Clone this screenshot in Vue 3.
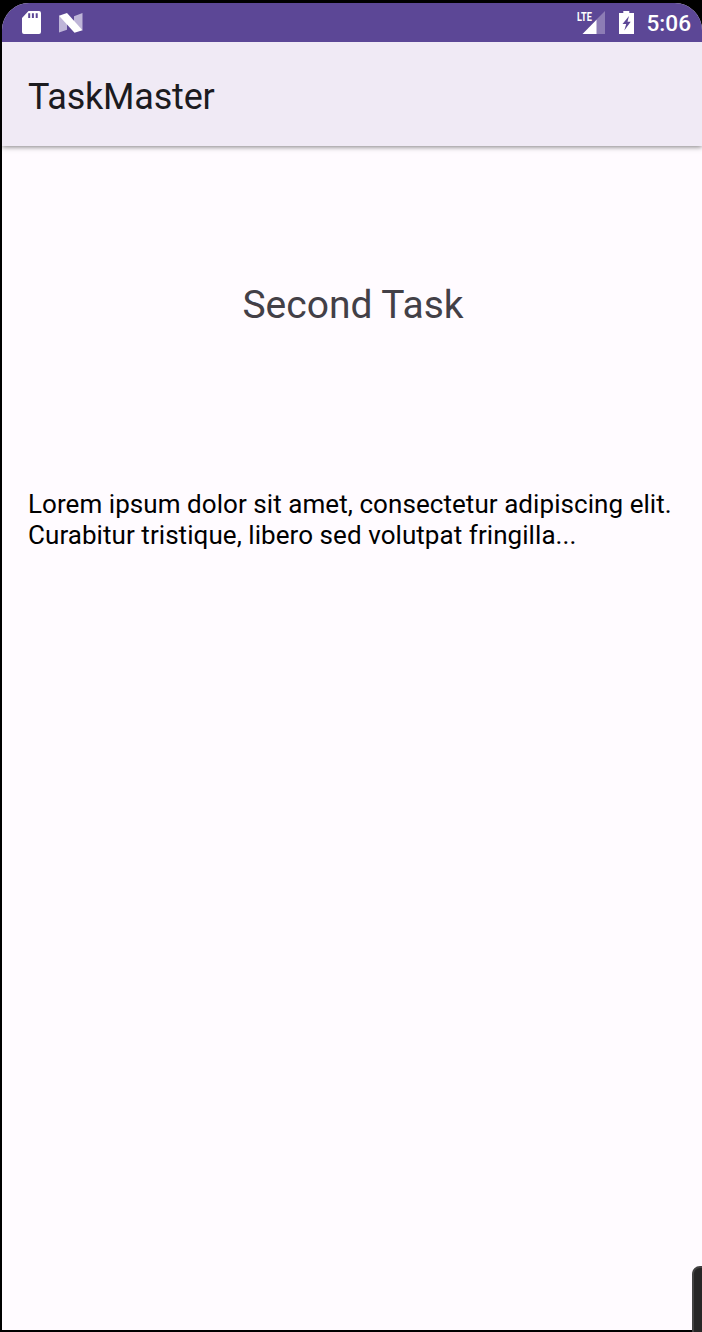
<script setup>
const appName = 'TaskMaster'
const taskTitle = 'Second Task'
const bodyLines = [
  'Lorem ipsum dolor sit amet, consectetur adipiscing elit.',
  'Curabitur tristique, libero sed volutpat fringilla...',
]
</script>

<template>
  <div class="device">
    <div class="screen">
      <header class="status">
        <svg class="sd" width="19" height="23" viewBox="0 0 19 23">
          <path fill="#fff" fill-rule="evenodd" d="M6.5 0H17a2 2 0 0 1 2 2v19a2 2 0 0 1-2 2H2a2 2 0 0 1-2-2V7zM6.2 2.2v4.8h2V2.2zM9.9 2.2v4.8h2V2.2zM13.7 2.2v4.8h2V2.2z" />
        </svg>
        <svg class="nougat" width="24" height="20" viewBox="0 0 24 20">
          <path fill="#beb5d8" d="M0 2.5 8 9v7.7L0 19.5zM15 3.2 23.5 0v17.5L15 10z" />
          <path fill="#fff" d="M0 2.7 8 0 23.5 17.2 15.5 19.7z" />
        </svg>
        <span class="gap"></span>
        <div class="signal">
          <svg width="29" height="24" viewBox="0 0 29 24">
            <path fill="#8d7db5" d="M28 0V23H19V9z" />
            <path fill="#fff" d="M19.5 8.7V23H5.5z" />
          </svg>
          <span class="lte">LTE</span>
        </div>
        <svg class="battery" width="15" height="23" viewBox="0 0 15 23">
          <path fill="#fff" fill-rule="evenodd" d="M4.3 0h6v2H15v21H0V2h4.3zM10 5 3.5 13H7.2L5.3 19.5 11.7 10.8H8.5z" />
        </svg>
        <span class="clock">5:06</span>
      </header>
      <div class="appbar"><h1>{{ appName }}</h1></div>
      <main>
        <h2>{{ taskTitle }}</h2>
        <p><span v-for="line in bodyLines" :key="line">{{ line }}</span></p>
      </main>
    </div>
    <div class="handle"></div>
  </div>
</template>

<style scoped>
.device {
  position: relative;
  box-sizing: border-box;
  width: 702px;
  height: 1332px;
  padding: 3px 0 2px 2px;
  overflow: hidden;
  background: #000;
  font-family: Roboto, sans-serif;
}
.screen {
  display: flex;
  flex-direction: column;
  height: 1327px;
  overflow: hidden;
  border-radius: 27px 27px 0 0;
  background: #fffbff;
}
.status {
  position: relative;
  z-index: 1;
  display: flex;
  flex: none;
  align-items: flex-start;
  box-sizing: border-box;
  height: 39px;
  padding: 8px 11px 0 20px;
  background: #5c4796;
  color: #fff;
}
.sd { flex: none; }
.nougat { flex: none; margin: 2px 0 0 17.5px; }
.gap { flex: 1; }
.signal {
  position: relative;
  width: 29px;
  height: 24px;
  margin-right: 13px;
}
.signal svg { display: block; }
.lte {
  position: absolute;
  left: 0;
  top: -1px;
  font-size: 13.5px;
  font-weight: 700;
  line-height: 13px;
  transform: scaleX(0.68);
  transform-origin: 0 0;
}
.battery { flex: none; margin-right: 13px; }
.clock {
  font-size: 22.6px;
  font-weight: 500;
  line-height: 26px;
}
.appbar {
  position: relative;
  display: flex;
  flex: none;
  align-items: center;
  height: 104px;
  padding-left: 26px;
  background: #f0eaf5;
  box-shadow: 0 1px 5px rgba(0, 0, 0, 0.5);
}
h1 {
  margin: 6px 0 0;
  font-size: 36px;
  font-weight: 400;
  line-height: 42px;
  letter-spacing: -0.2px;
  color: #1c1b1f;
}
main { flex: 1; }
h2 {
  margin: 136px 0 0;
  padding-left: 2px;
  text-align: center;
  font-size: 39px;
  font-weight: 400;
  line-height: 46px;
  color: #434047;
}
p {
  margin: 161px 0 0 26px;
  font-size: 26px;
  line-height: 31px;
  letter-spacing: 0.06px;
  color: #000;
}
p span {
  display: block;
  white-space: nowrap;
}
.handle {
  position: absolute;
  left: 692px;
  top: 1266px;
  box-sizing: border-box;
  width: 20px;
  height: 76px;
  border: 2px solid #424242;
  border-radius: 8px;
  background: #262626;
}
</style>

<style>
body { margin: 0; }
</style>
